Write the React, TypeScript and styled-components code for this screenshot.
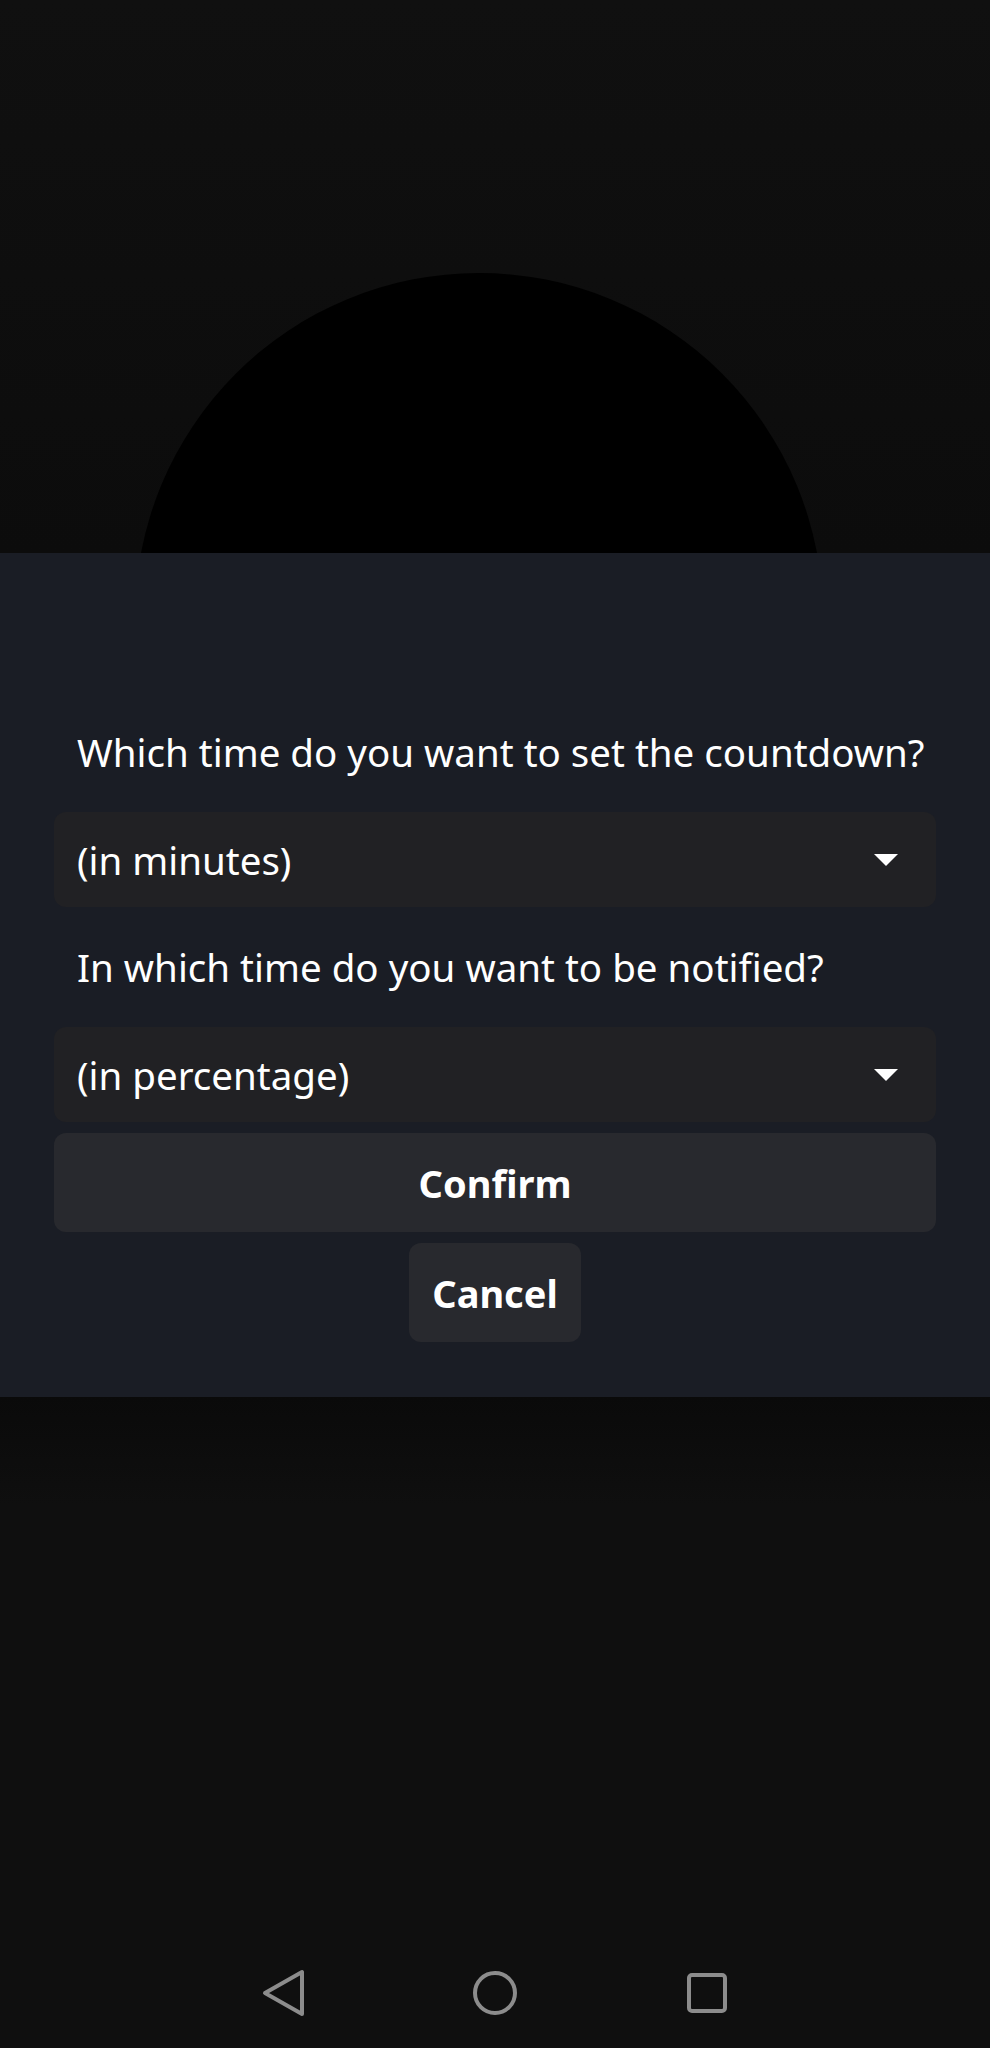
import styled, { createGlobalStyle } from 'styled-components';

const GlobalStyle = createGlobalStyle`
  html, body {
    margin: 0;
    padding: 0;
    background: #0f0f0f;
  }
  body {
    font-family: 'Noto Sans', 'Open Sans', sans-serif;
    color: #fff;
  }
  * {
    box-sizing: border-box;
  }
`;

const StyledScreen = styled.div`
  display: flex;
  flex-direction: column;
  height: 2048px;
  width: 990px;
  overflow: hidden;
`;

const StyledHero = styled.header`
  background: linear-gradient(#101010, #0c0c0c);
  display: flex;
  flex-shrink: 0;
  height: 553px;
  justify-content: center;
  overflow: hidden;
  padding-top: 273px;
`;

const StyledDisc = styled.div`
  background: #000;
  border-radius: 50%;
  flex-shrink: 0;
  height: 688px;
  margin-right: 32px;
  width: 688px;
`;

const StyledDialog = styled.section`
  background: #1a1d25;
  display: flex;
  flex-direction: column;
  flex-shrink: 0;
  height: 844px;
  padding: 173px 54px 0;
`;

const StyledQuestion = styled.p`
  font-size: 38.5px;
  line-height: 52px;
  margin: 0 0 34px;
  padding-left: 23px;
  white-space: nowrap;
`;

const StyledSelect = styled.div<{ $gap: number }>`
  align-items: center;
  background: #212124;
  border-radius: 12px;
  display: flex;
  font-size: 38.5px;
  height: 95px;
  justify-content: space-between;
  line-height: 52px;
  margin-bottom: ${({ $gap }) => `${$gap}px`};
  padding: 0 38px 0 23px;

  svg {
    display: block;
    fill: #fff;
  }
`;

const StyledButton = styled.button<{ $wide?: boolean }>`
  align-self: ${({ $wide }) => ($wide ? 'stretch' : 'center')};
  background: #28292e;
  border: 0;
  border-radius: 12px;
  color: #fff;
  font-family: 'Noto Sans', 'Open Sans', sans-serif;
  font-size: 38px;
  font-weight: 700;
  height: 99px;
  line-height: 52px;
  margin-bottom: 11px;
  padding: 0 23px;
`;

const StyledBackdrop = styled.main`
  background: linear-gradient(#0a0a0a, #0f0f0f 20%);
  flex: 1;
`;

const StyledNavBar = styled.nav`
  align-items: center;
  background: #0f0f0f;
  display: flex;
  flex-shrink: 0;
  gap: 166px;
  height: 110px;
  justify-content: center;

  svg {
    display: block;
    fill: none;
    stroke: #8c8c8c;
    stroke-linejoin: round;
    stroke-width: 4;
  }
`;

type SelectProps = {
  placeholder: string;
  gap: number;
};

const Select = ({ placeholder, gap }: SelectProps): JSX.Element => (
  <StyledSelect $gap={gap}>
    <span>{placeholder}</span>
    <svg width="24" height="12" viewBox="0 0 10 5">
      <polygon points="0,0 10,0 5,5" />
    </svg>
  </StyledSelect>
);

const NavBar: React.FC = () => (
  <StyledNavBar>
    <svg width="46" height="48" viewBox="0 0 46 48">
      <path d="M5 24 L42 3 L42 45 Z" />
    </svg>
    <svg width="46" height="46" viewBox="0 0 46 46">
      <circle cx="23" cy="23" r="20" />
    </svg>
    <svg width="46" height="46" viewBox="0 0 46 46">
      <rect x="5" y="5" width="36" height="36" rx="3" />
    </svg>
  </StyledNavBar>
);

const App: React.FC = () => (
  <>
    <GlobalStyle />
    <StyledScreen>
      <StyledHero>
        <StyledDisc />
      </StyledHero>
      <StyledDialog>
        <StyledQuestion>Which time do you want to set the countdown?</StyledQuestion>
        <Select placeholder="(in minutes)" gap={34} />
        <StyledQuestion>In which time do you want to be notified?</StyledQuestion>
        <Select placeholder="(in percentage)" gap={11} />
        <StyledButton $wide>Confirm</StyledButton>
        <StyledButton>Cancel</StyledButton>
      </StyledDialog>
      <StyledBackdrop />
      <NavBar />
    </StyledScreen>
  </>
);

export default App;
